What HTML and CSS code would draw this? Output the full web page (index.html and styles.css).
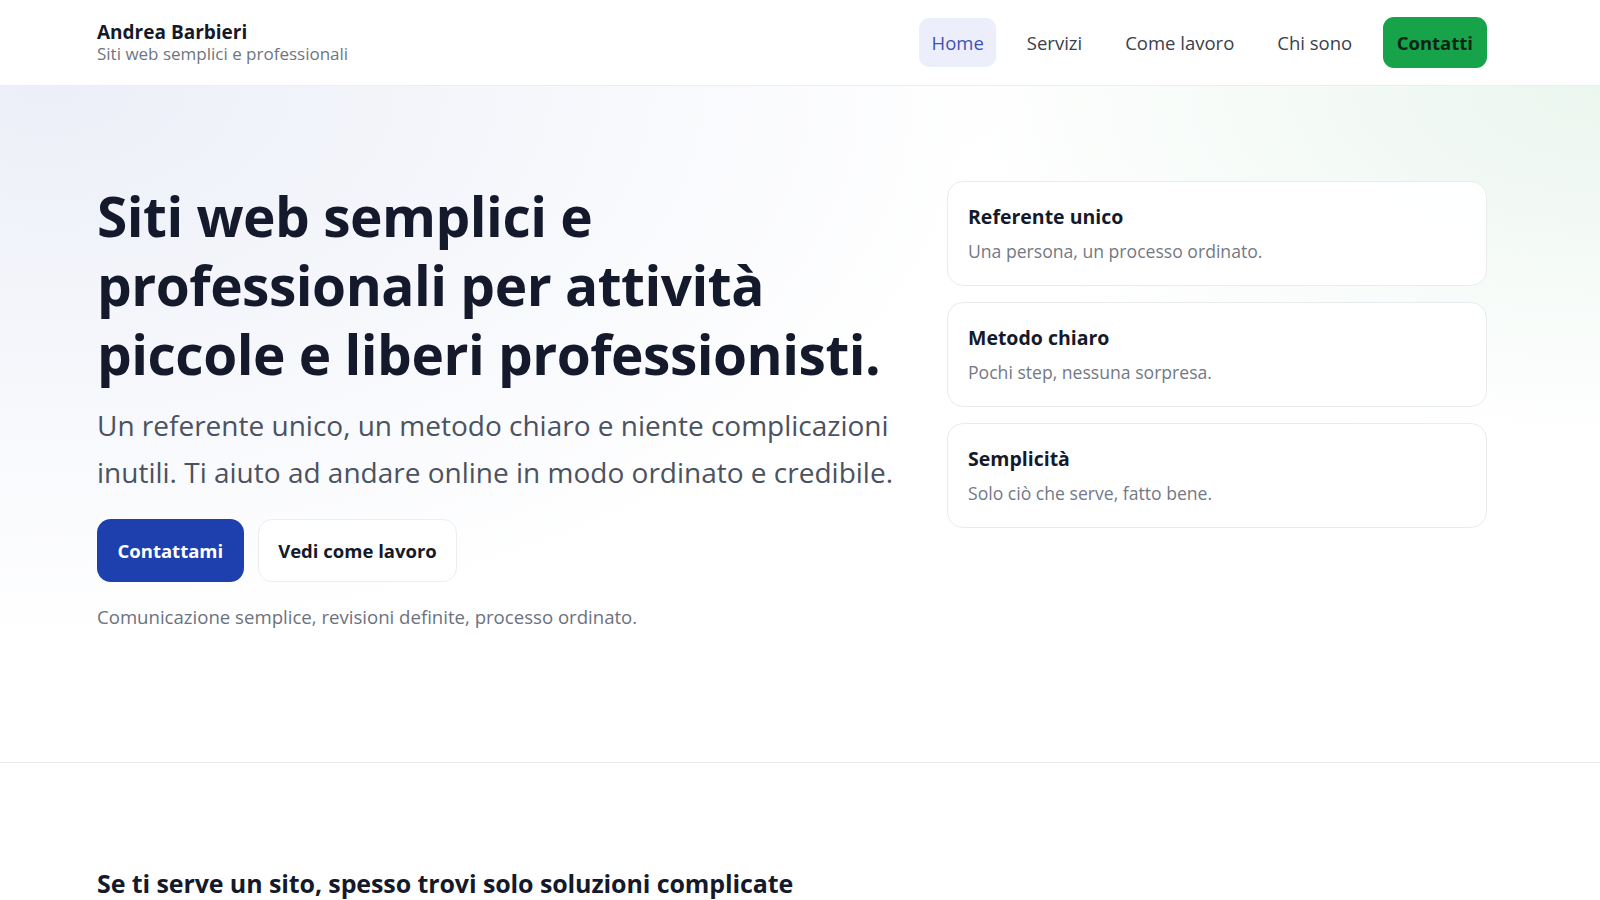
FILE: index.html
```html
<!DOCTYPE html>
<html lang="it">
<head>
    <meta charset="UTF-8">
    <meta name="viewport" content="width=device-width, initial-scale=1.0">
    <title>Andrea Barbieri - Siti web semplici e professionali</title>
    <link rel="stylesheet" href="styles.css">
</head>
<body>

    <header class="site-header">
        <div class="container header-inner">
            <a class="brand" href="#">
                <span class="brand-name">Andrea Barbieri</span>
                <span class="brand-tag">Siti web semplici e professionali</span>
            </a>
            <nav class="nav">
                <a class="nav-link active" href="#">Home</a>
                <a class="nav-link" href="#servizi">Servizi</a>
                <a class="nav-link" href="#metodo">Come lavoro</a>
                <a class="nav-link" href="#chi-sono">Chi sono</a>
                <a class="nav-cta" href="#contatti">Contatti</a>
            </nav>
        </div>
    </header>

    <main>
        <section class="hero">
            <div class="container hero-grid">
                <div class="hero-copy">
                    <h1>Siti web semplici e professionali per attività piccole e liberi professionisti.</h1>
                    <p class="lead">Un referente unico, un metodo chiaro e niente complicazioni inutili. Ti aiuto ad andare online in modo ordinato e credibile.</p>
                    <div class="actions">
                        <a class="btn btn-primary" href="#contatti">Contattami</a>
                        <a class="btn btn-ghost" href="#metodo">Vedi come lavoro</a>
                    </div>
                    <p class="note">Comunicazione semplice, revisioni definite, processo ordinato.</p>
                </div>
                <div class="hero-cards">
                    <div class="card">
                        <h3>Referente unico</h3>
                        <p>Una persona, un processo ordinato.</p>
                    </div>
                    <div class="card">
                        <h3>Metodo chiaro</h3>
                        <p>Pochi step, nessuna sorpresa.</p>
                    </div>
                    <div class="card">
                        <h3>Semplicità</h3>
                        <p>Solo ciò che serve, fatto bene.</p>
                    </div>
                </div>
            </div>
        </section>

        <section class="problem">
            <div class="container">
                <h2>Se ti serve un sito, spesso trovi solo soluzioni complicate</h2>
            </div>
        </section>
    </main>

</body>
</html>
```

FILE: styles.css
```css
*{
    margin: 0;
    padding: 0;
    box-sizing: border-box;
}
body{
    font-family: "Open Sans", "Noto Sans", sans-serif;
    color: #111827;
    background: #fff;
}
a{
    text-decoration: none;
    color: inherit;
}
.container{
    max-width: 1390px;
    margin-left: 97px;
}

/* header */
.site-header{
    background: #fff;
    border-bottom: 1px solid #eceef2;
}
.header-inner{
    height: 85px;
    display: flex;
    align-items: center;
    justify-content: space-between;
}
.brand{
    display: flex;
    flex-direction: column;
}
.brand-name{
    font-size: 19px;
    font-weight: 700;
    line-height: 21px;
    color: #141a2b;
}
.brand-tag{
    font-size: 17px;
    line-height: 21px;
    color: #6f7580;
}
.nav{
    display: flex;
    align-items: center;
    gap: 18px;
}
.nav-link{
    padding: 12px 12.5px;
    border-radius: 10px;
    font-size: 18.5px;
    line-height: 25px;
    color: #3a404c;
}
.nav-link.active{
    background: #eceffb;
    color: #3f51b5;
}
.nav-cta{
    padding: 13px 14px;
    border-radius: 11px;
    background: #16a34a;
    color: #0b2616;
    font-size: 18.5px;
    font-weight: 700;
    line-height: 25px;
}

/* hero */
.hero{
    padding: 95px 0 131px;
    border-bottom: 1px solid #e8eaee;
    background:
        radial-gradient(ellipse 950px 560px at 3% 0%, #eceff8, rgba(236,239,248,0) 100%),
        radial-gradient(ellipse 650px 360px at 100% 0%, #ebf6ef, rgba(235,246,239,0) 100%),
        #fff;
}
.hero-grid{
    display: grid;
    grid-template-columns: 1.5fr 1fr;
    gap: 40px;
    align-items: start;
}
h1{
    font-size: 55px;
    line-height: 69px;
    font-weight: 700;
    letter-spacing: -0.5px;
    color: #141a2b;
}
.lead{
    margin-top: 14px;
    font-size: 28px;
    line-height: 46.5px;
    color: #4b5260;
}
.actions{
    display: flex;
    gap: 14px;
    margin-top: 24px;
}
.btn{
    display: inline-flex;
    align-items: center;
    height: 63px;
    padding: 0 19.5px;
    border: 1px solid transparent;
    border-radius: 14px;
    font-size: 18.5px;
    font-weight: 700;
}
.btn-primary{
    background: #1e3fae;
    color: #fff;
}
.btn-ghost{
    background: #fff;
    border-color: #eceef1;
    color: #141a2b;
}
.note{
    margin-top: 21px;
    font-size: 18.6px;
    line-height: 28px;
    color: #6b7280;
}

.hero-cards{
    display: flex;
    flex-direction: column;
    gap: 16px;
}
.card{
    height: 105px;
    padding: 22px 20px 0;
    background: rgba(255,255,255,0.92);
    border: 1px solid #e9ebef;
    border-radius: 16px;
}
.card h3{
    font-size: 19.5px;
    line-height: 26px;
    font-weight: 700;
    color: #141a2b;
}
.card p{
    margin-top: 8px;
    font-size: 17.6px;
    line-height: 26px;
    color: #737985;
}

/* next section */
.problem{
    padding-top: 104px;
}
.problem h2{
    font-size: 25px;
    line-height: 32px;
    font-weight: 700;
    letter-spacing: -0.1px;
    color: #141a2b;
}
```
